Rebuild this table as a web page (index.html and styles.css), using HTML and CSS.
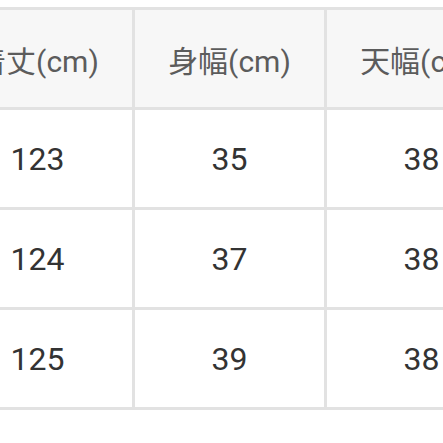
FILE: index.html
```html
<!DOCTYPE html>
<html lang="ja">
<head>
<meta charset="utf-8">
<link rel="stylesheet" href="styles.css">
</head>
<body>
<div class="wrap">
  <div class="grid">
    <div class="cell head">着丈(cm)</div>
    <div class="cell head">身幅(cm)</div>
    <div class="cell head">天幅(cm)</div>
    <div class="cell">123</div>
    <div class="cell">35</div>
    <div class="cell">38</div>
    <div class="cell">124</div>
    <div class="cell">37</div>
    <div class="cell">38</div>
    <div class="cell">125</div>
    <div class="cell">39</div>
    <div class="cell">38</div>
  </div>
</div>
</body>
</html>
```
FILE: styles.css
```css
html, body {
  margin: 0;
  padding: 0;
  background: #ffffff;
  width: 443px;
  height: 443px;
  overflow: hidden;
}
.wrap {
  padding-top: 7px;
}
.grid {
  display: grid;
  grid-template-columns: repeat(3, 189px);
  grid-auto-rows: 97px;
  gap: 3px;
  padding: 3px;
  background: #e2e2e2;
  width: max-content;
  margin-left: -60px;
}
.cell {
  background: #ffffff;
  display: flex;
  align-items: center;
  justify-content: center;
  font-family: Roboto, "Noto Sans CJK JP", sans-serif;
  font-size: 32px;
  color: #333333;
}
.head {
  background: #f7f7f7;
  color: #5c5c5c;
  font-size: 30px;
}
```
